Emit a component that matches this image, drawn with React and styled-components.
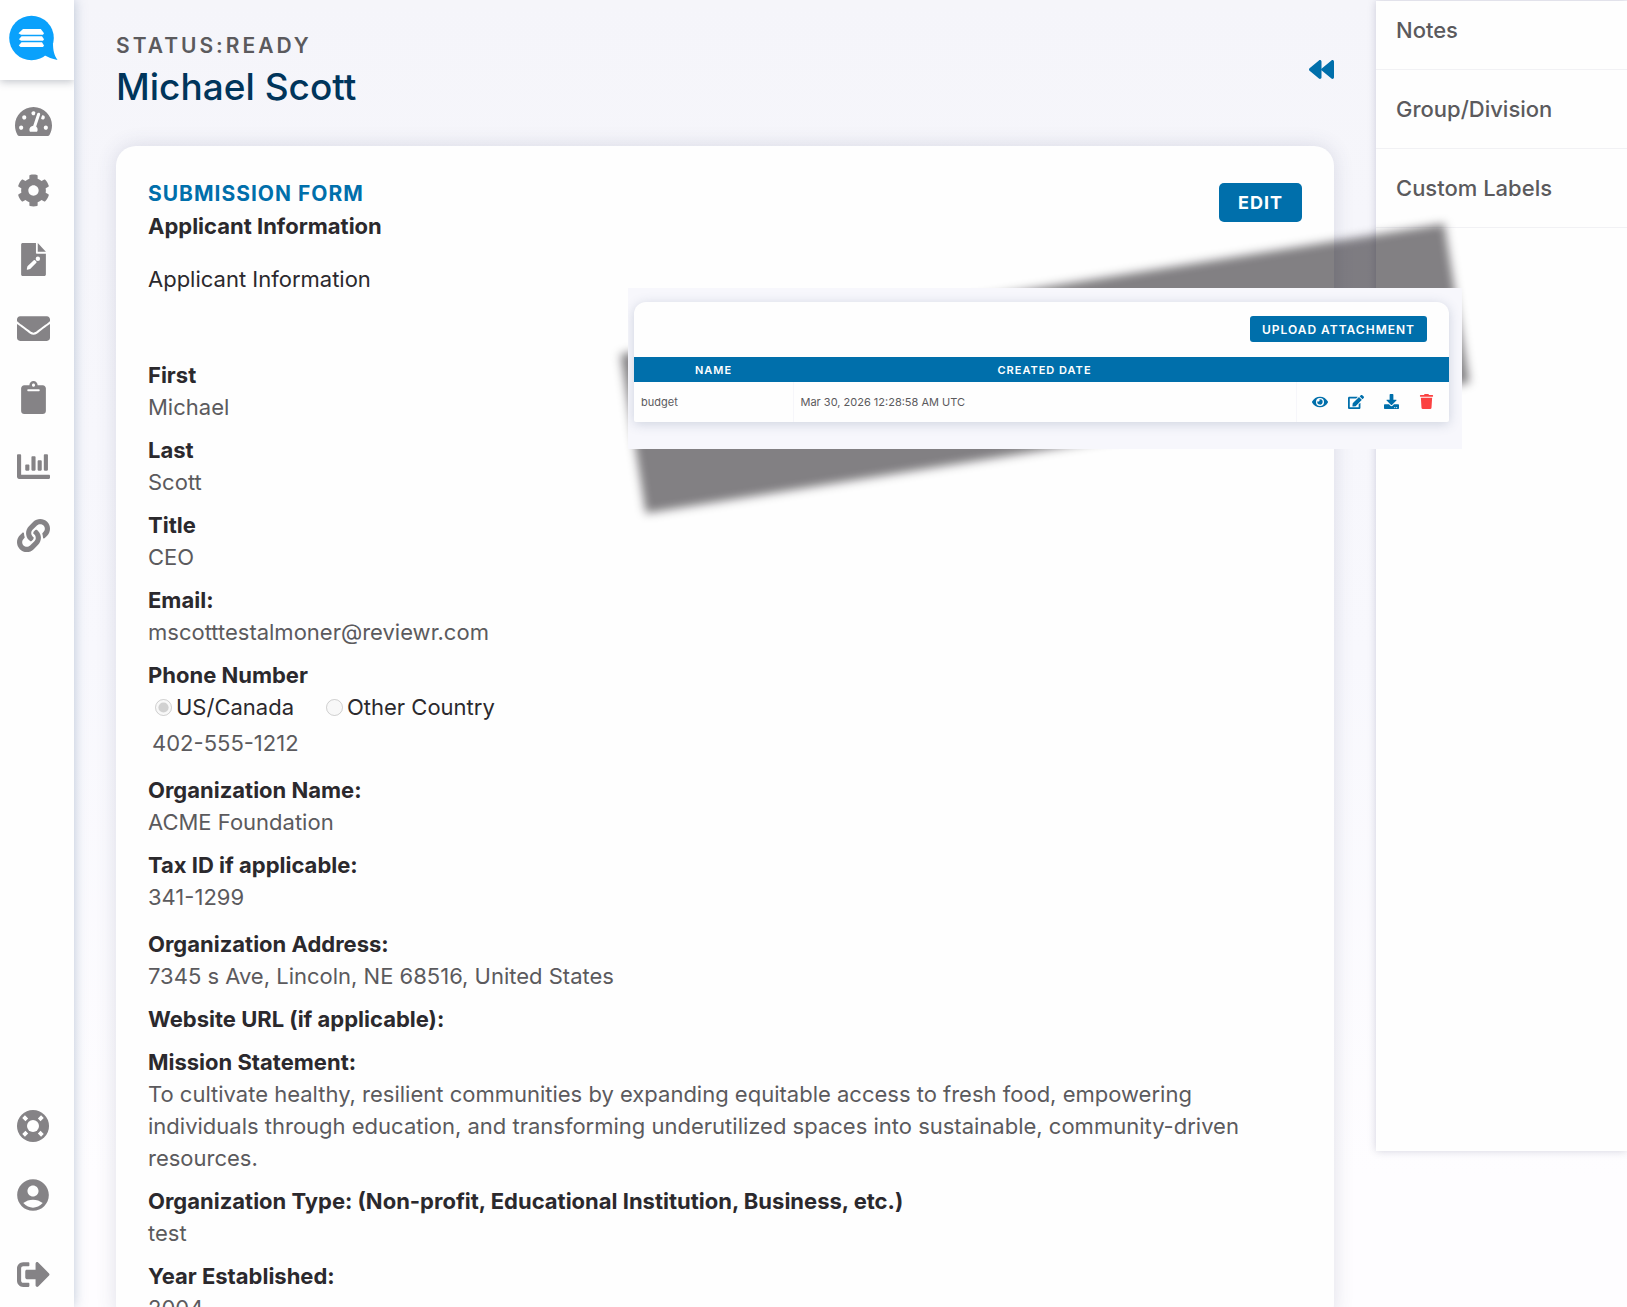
import React from "react";
import styled, { createGlobalStyle, css } from "styled-components";
import {
  FaTachometerAlt,
  FaCog,
  FaEnvelope,
  FaChartBar,
  FaLink,
  FaSignOutAlt,
  FaBackward,
  FaEye,
  FaEdit,
  FaDownload,
  FaTrash,
} from "react-icons/fa";
import { MdAccountCircle } from "react-icons/md";

const color = {
  brand: "#006fab",
  navy: "#00355b",
  ink: "#2b292d",
  text: "#5b5a5d",
  icon: "#858386",
  danger: "#fb4141",
};

const GlobalStyle = createGlobalStyle`
  *, *::before, *::after { box-sizing: border-box; }
  body {
    margin: 0;
    font-family: Inter, "Liberation Sans", sans-serif;
    font-size: 22px;
    line-height: 32px;
    color: ${color.text};
  }
  h1, h2, h3, p, dl, dd { margin: 0; }
`;

const Shell = styled.div`
  position: relative;
  display: flex;
  height: 100vh;
  overflow: hidden;
  background: linear-gradient(#f5f5fa, #f8f8fd 50%, #fefdff 90%);
`;

const Sidebar = styled.nav`
  display: flex;
  flex-direction: column;
  flex: none;
  width: 74px;
  background: #fefefe;
  box-shadow: 0 0 12px rgba(70, 100, 140, 0.35);
  z-index: 1;
`;

const LogoLink = styled.a`
  display: flex;
  height: 80px;
  margin-bottom: 7px;
  background: #fff;
  box-shadow: 0 2px 8px rgba(60, 70, 90, 0.3);
  clip-path: inset(0 0 -12px 0);
`;

const NavLink = styled.a`
  display: flex;
  align-items: center;
  justify-content: center;
  height: 69px;
  padding-right: 8px;
  color: ${color.icon};
`;

const NavFooter = styled.div`
  margin-top: auto;
  a:last-child {
    height: 66px;
    margin-top: 12px;
  }
`;

const Main = styled.main`
  flex: 1;
  min-width: 0;
  padding: 30px 42px 0;
`;

const PageHeader = styled.header`
  display: flex;
  justify-content: space-between;
  align-items: center;
  height: 82px;
`;

const Status = styled.p`
  font-size: 21px;
  font-weight: 600;
  letter-spacing: 3px;
`;

const ApplicantName = styled.h1`
  font-size: 37px;
  line-height: 50px;
  font-weight: 500;
  color: ${color.navy};
`;

const CollapseButton = styled.button`
  display: flex;
  padding: 0 0 4px;
  border: 0;
  background: none;
  color: ${color.brand};
`;

const Card = styled.section`
  margin-top: 34px;
  padding: 32px 32px 0;
  border-radius: 20px;
  background: #fefefe;
  box-shadow: 0 0 20px rgba(60, 70, 110, 0.16);
`;

const CardHeader = styled.div`
  display: flex;
  justify-content: space-between;
  align-items: flex-start;
`;

const SectionLabel = styled.h2`
  font-size: 21px;
  line-height: 32px;
  font-weight: 700;
  letter-spacing: 1px;
  color: ${color.brand};
`;

const SectionTitle = styled.h3`
  font-size: 22px;
  line-height: 32px;
  font-weight: 700;
  color: ${color.ink};
`;

const Intro = styled.p`
  margin: 21px 0 64px;
  color: ${color.ink};
`;

const Button = styled.button`
  border: 0;
  background: ${color.brand};
  color: #fff;
  font-family: inherit;
  ${({ $small }) =>
    $small
      ? css`
          height: 26px;
          padding: 0 12px;
          border-radius: 3px;
          font-size: 12px;
          font-weight: 600;
          letter-spacing: 1px;
        `
      : css`
          height: 39px;
          margin-top: 5px;
          padding: 0 19px;
          border-radius: 5px;
          font-size: 18px;
          font-weight: 700;
          letter-spacing: 1px;
        `}
`;

const Field = styled.div`
  margin-bottom: ${({ $loose }) => ($loose ? 15 : 11)}px;
  dt {
    font-weight: 700;
    color: ${color.ink};
  }
`;

const RadioRow = styled.div`
  display: flex;
  gap: 32px;
  padding-left: 7px;
`;

const RadioLabel = styled.label`
  display: flex;
  align-items: center;
  gap: 4px;
  color: ${color.ink};
  input {
    width: 17px;
    height: 17px;
    margin: 0;
  }
`;

const Phone = styled.div`
  padding: 4px 4px 0;
`;

const SidePanel = styled.aside`
  flex: none;
  align-self: flex-start;
  width: 251px;
  height: 88vh;
  margin-top: 1px;
  background: #fefefe;
  box-shadow: 0 0 8px rgba(60, 60, 100, 0.22);
`;

const PanelItem = styled.a`
  display: block;
  padding: 23px 20px;
  border-bottom: 1px solid #f1f1f4;
  font-weight: 500;
  color: ${color.text};
  text-decoration: none;
  &:first-child { padding-top: 13px; }
`;

const Popover = styled.section`
  position: absolute;
  top: 288px;
  right: 165px;
  z-index: 2;
  width: 834px;
  &::before {
    content: "";
    position: absolute;
    inset: 0;
    background: rgba(6, 2, 8, 0.5);
    filter: blur(5px);
    transform: rotate(-9deg);
  }
`;

const PopoverSurface = styled.div`
  position: relative;
  padding: 14px 13px 27px 6px;
  overflow: hidden;
  background: #f7f7fc;
`;

const AttachmentCard = styled.div`
  border-radius: 12px 12px 2px 2px;
  background: #fefefe;
  box-shadow: 0 2px 12px rgba(60, 80, 120, 0.22);
`;

const AttachmentBar = styled.div`
  display: flex;
  justify-content: flex-end;
  padding: 14px 22px 15px;
`;

const AttachmentTable = styled.table`
  width: 100%;
  table-layout: fixed;
  border-collapse: collapse;
  font-size: 11px;
  line-height: 16px;
  th {
    height: 25px;
    padding: 0;
    background: ${color.brand};
    color: #fff;
    font-weight: 600;
    letter-spacing: 1px;
  }
  td {
    height: 40px;
    padding: 0 7px;
  }
  td + td { border-left: 1px solid #f6f6fa; }
`;

const Col = styled.col`
  width: ${({ $w }) => $w};
`;

const Actions = styled.div`
  display: flex;
  justify-content: space-between;
  padding: 0 8px;
`;

const IconButton = styled.button`
  display: flex;
  padding: 0;
  border: 0;
  background: none;
  color: ${({ $danger }) => ($danger ? color.danger : color.brand)};
`;

const Logo = () => (
  <svg width="62" height="80" viewBox="0 0 62 80" aria-hidden="true">
    <circle cx="31.5" cy="38" r="22.3" fill="#0aa1fc" />
    <path d="M53 43C53 50 54 55 57.5 60C52 59 48 57 44 55Z" fill="#0aa1fc" />
    <g fill="#fff">
      <path d="M23 29H40.8L44 33.2L43 34.7H21L18.5 33.2Z" />
      <path d="M21.5 36.2H42L44 39.3L43 40.8H21L19 39.3Z" />
      <path d="M21.5 42.3H42L44 45.6L43 47.1H20.5L18.8 45.6Z" />
    </g>
  </svg>
);

const FilePencil = () => (
  <svg width="25" height="33" viewBox="0 0 384 512" fill="currentColor" aria-hidden="true">
    <path d="M230 150V0H24C10 0 0 10 0 24v464c0 14 10 24 24 24h336c14 0 24-10 24-24V168H250c-12 0-20-6-20-18z" />
    <path d="M384 134H258V0z" />
    <path d="M88 404L98 362L196 266Q206 258 216 266L236 286Q244 296 236 306L140 402L98 416Q84 418 88 404Z" fill="#fff" />
    <circle cx="260" cy="244" r="34" fill="#fff" />
  </svg>
);

const Clipboard = () => (
  <svg width="25" height="33" viewBox="0 0 384 512" fill="currentColor" aria-hidden="true">
    <path
      fillRule="evenodd"
      d="M336 64h-80c0-35-29-64-64-64s-64 29-64 64H48C21 64 0 85 0 112v352c0 27 21 48 48 48h288c27 0 48-21 48-48V112c0-27-21-48-48-48zM192 40c13 0 24 11 24 24s-11 24-24 24-24-11-24-24 11-24 24-24zm96 108v-10c0-6-5-10-10-10H106c-6 0-10 5-10 10v10c0 6 5 10 10 10h172c6 0 10-5 10-10z"
    />
  </svg>
);

const LifeRing = () => (
  <svg width="32" height="32" viewBox="0 0 32 32" aria-hidden="true">
    <circle cx="16" cy="16" r="16" fill="currentColor" />
    <circle cx="16" cy="16" r="6" fill="#fff" />
    <g stroke="#fff" strokeWidth="3.8">
      <path d="M6.6 6.6l3.2 3.2M25.4 6.6l-3.2 3.2M6.6 25.4l3.2-3.2M25.4 25.4l-3.2-3.2" />
    </g>
  </svg>
);

const navItems = [
  ["Dashboard", <FaTachometerAlt size={37} />],
  ["Settings", <FaCog size={33} />],
  ["Forms", <FilePencil />],
  ["Messages", <FaEnvelope size={33} />],
  ["Submissions", <Clipboard />],
  ["Reports", <FaChartBar size={33} />],
  ["Links", <FaLink size={33} />],
];

const footerItems = [
  ["Help", <LifeRing />],
  ["Account", <MdAccountCircle size={38} />],
  ["Sign out", <FaSignOutAlt size={33} />],
];

const renderNav = ([label, icon]) => (
  <NavLink key={label} href="#" aria-label={label}>
    {icon}
  </NavLink>
);

const fieldsBeforePhone = [
  { label: "First", value: "Michael" },
  { label: "Last", value: "Scott" },
  { label: "Title", value: "CEO" },
  { label: "Email:", value: "mscotttestalmoner@reviewr.com" },
];

const fieldsAfterPhone = [
  { label: "Organization Name:", value: "ACME Foundation" },
  { label: "Tax ID if applicable:", value: "341-1299", loose: true },
  { label: "Organization Address:", value: "7345 s Ave, Lincoln, NE 68516, United States" },
  { label: "Website URL (if applicable):" },
  {
    label: "Mission Statement:",
    value:
      "To cultivate healthy, resilient communities by expanding equitable access to fresh food, empowering individuals through education, and transforming underutilized spaces into sustainable, community-driven resources.",
  },
  { label: "Organization Type: (Non-profit, Educational Institution, Business, etc.)", value: "test" },
  { label: "Year Established:", value: "2004" },
];

const renderField = ({ label, value, loose }) => (
  <Field key={label} $loose={loose}>
    <dt>{label}</dt>
    {value && <dd>{value}</dd>}
  </Field>
);

const Attachments = () => (
  <Popover aria-label="Attachments">
    <PopoverSurface>
      <AttachmentCard>
        <AttachmentBar>
          <Button $small>UPLOAD ATTACHMENT</Button>
        </AttachmentBar>
        <AttachmentTable>
          <colgroup>
            <Col $w="159px" />
            <Col />
            <Col $w="153px" />
          </colgroup>
          <thead>
            <tr>
              <th>NAME</th>
              <th>CREATED DATE</th>
              <th aria-label="Actions" />
            </tr>
          </thead>
          <tbody>
            <tr>
              <td>budget</td>
              <td>Mar 30, 2026 12:28:58 AM UTC</td>
              <td>
                <Actions>
                  <IconButton aria-label="View"><FaEye size={16} /></IconButton>
                  <IconButton aria-label="Edit"><FaEdit size={16} /></IconButton>
                  <IconButton aria-label="Download"><FaDownload size={15} /></IconButton>
                  <IconButton aria-label="Delete" $danger><FaTrash size={15} /></IconButton>
                </Actions>
              </td>
            </tr>
          </tbody>
        </AttachmentTable>
      </AttachmentCard>
    </PopoverSurface>
  </Popover>
);

export default function App() {
  return (
    <>
      <GlobalStyle />
      <Shell>
        <Sidebar>
          <LogoLink href="#" aria-label="Home"><Logo /></LogoLink>
          {navItems.map(renderNav)}
          <NavFooter>{footerItems.map(renderNav)}</NavFooter>
        </Sidebar>
        <Main>
          <PageHeader>
            <div>
              <Status>STATUS:READY</Status>
              <ApplicantName>Michael Scott</ApplicantName>
            </div>
            <CollapseButton aria-label="Collapse panel"><FaBackward size={25} /></CollapseButton>
          </PageHeader>
          <Card>
            <CardHeader>
              <div>
                <SectionLabel>SUBMISSION FORM</SectionLabel>
                <SectionTitle>Applicant Information</SectionTitle>
              </div>
              <Button>EDIT</Button>
            </CardHeader>
            <Intro>Applicant Information</Intro>
            <dl>
              {fieldsBeforePhone.map(renderField)}
              <Field $loose>
                <dt>Phone Number</dt>
                <dd>
                  <RadioRow>
                    <RadioLabel>
                      <input type="radio" name="country" defaultChecked disabled />
                      US/Canada
                    </RadioLabel>
                    <RadioLabel>
                      <input type="radio" name="country" disabled />
                      Other Country
                    </RadioLabel>
                  </RadioRow>
                  <Phone>402-555-1212</Phone>
                </dd>
              </Field>
              {fieldsAfterPhone.map(renderField)}
            </dl>
          </Card>
        </Main>
        <SidePanel>
          <PanelItem href="#">Notes</PanelItem>
          <PanelItem href="#">Group/Division</PanelItem>
          <PanelItem href="#">Custom Labels</PanelItem>
        </SidePanel>
        <Attachments />
      </Shell>
    </>
  );
}
